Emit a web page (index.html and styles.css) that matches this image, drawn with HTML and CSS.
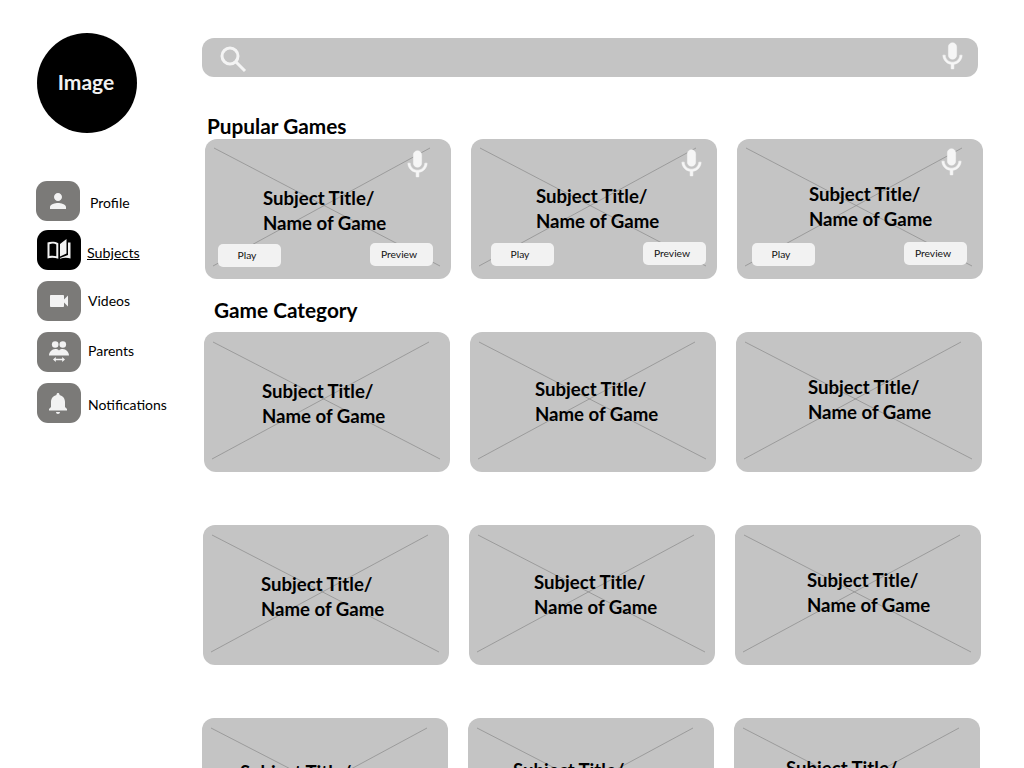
FILE: index.html
```html
<!DOCTYPE html>
<html lang="en">
<head>
<meta charset="utf-8">
<title>Games</title>
<link rel="stylesheet" href="styles.css">
</head>
<body>
<div class="page">
  <aside class="sidebar">
    <div class="avatar">Image</div>
    <nav class="nav">
      <a class="item item-profile"><span class="tile"><svg viewBox="0 0 24 24"><path d="M12 12c2.210 0 4-1.790 4-4s-1.790-4-4-4-4 1.790-4 4 1.790 4 4 4zm0 2c-2.670 0-8 1.340-8 4v2h16v-2c0-2.660-5.330-4-8-4z"/></svg></span><span class="label">Profile</span></a>
      <a class="item item-subjects"><span class="tile tile-active"><svg viewBox="0 0 24 24"><path fill-rule="evenodd" d="M.5 4.500C3.500 3.500 8 3.500 11.300 5.200V20.800C8 19.400 3.500 19.400.5 20.400ZM2.500 6.200V18C5 17.500 7.300 17.600 9.300 18.200V6.400C7.300 5.400 5 5.400 2.500 6.200Z"/><path d="M13 6L19.500 1V15.500L13 18.500ZM21 4.500H23.500V20.400C20 19.400 16.300 19.500 13 20.800V20L21 17Z"/></svg></span><span class="label label-link">Subjects</span></a>
      <a class="item item-videos"><span class="tile"><svg viewBox="0 0 24 24"><path d="M17 10.500V7c0-.55-.45-1-1-1H4c-.55 0-1 .45-1 1v10c0 .55.45 1 1 1h12c.55 0 1-.45 1-1v-3.500l4 4v-11l-4 4z"/></svg></span><span class="label">Videos</span></a>
      <a class="item item-parents"><span class="tile"><svg viewBox="0 0 24 24"><circle cx="8.200" cy="4.500" r="3.300"/><circle cx="15.800" cy="4.500" r="3.300"/><path d="M2 15.500C2 12 5 9 8.200 9c1.600 0 2.900.5 3.800 1.400C12.900 9.500 14.200 9 15.800 9 19 9 22 12 22 15.500Z"/><path d="M6 19.500l2.800-2.500v1.800h6.400V17l2.800 2.500-2.800 2.500v-1.800H8.800V22Z"/></svg></span><span class="label">Parents</span></a>
      <a class="item item-notes"><span class="tile"><svg class="bell" viewBox="0 0 24 24"><path d="M12 23c1.100 0 2-.9 2-2h-4c0 1.100.89 2 2 2zm7-7v-5c0-3.500-2-6.300-5.500-7.100V3.500C13.500 2.670 12.830 2 12 2s-1.500.67-1.500 1.500v.4C7 4.700 5 7.500 5 11v5l-2 2v1.500h18V18l-2-2z"/></svg></span><span class="label">Notifications</span></a>
    </nav>
  </aside>
  <main class="main">
    <div class="search">
      <svg class="search-icon" viewBox="0 0 28 28"><circle cx="11" cy="11" r="8"/><path d="M17 17L26 26"/></svg>
      <svg class="mic-icon" viewBox="0 0 24 24"><path d="M12 14c1.660 0 2.990-1.340 2.990-3L15 5c0-1.660-1.340-3-3-3S9 3.340 9 5v6c0 1.660 1.340 3 3 3zm5.300-3c0 3-2.540 5.100-5.300 5.100S6.700 14 6.700 11H5c0 3.410 2.720 6.230 6 6.720V21h2v-3.280c3.280-.48 6-3.300 6-6.720h-1.700z"/></svg>
    </div>

    <h2 class="heading heading-popular">Pupular Games</h2>
    <section class="row row-1">
      <article class="card col-1">
        <svg class="cross" viewBox="0 0 246 140" preserveAspectRatio="none"><path d="M9 9L235 127M225 9L8 127"/></svg>
        <svg class="card-mic" viewBox="0 0 24 24"><path d="M12 14c1.660 0 2.990-1.340 2.990-3L15 5c0-1.660-1.340-3-3-3S9 3.340 9 5v6c0 1.660 1.340 3 3 3zm5.300-3c0 3-2.540 5.100-5.300 5.100S6.700 14 6.700 11H5c0 3.410 2.720 6.230 6 6.720V21h2v-3.280c3.280-.48 6-3.300 6-6.720h-1.700z"/></svg>
        <p class="title">Subject Title/<br>Name of Game</p>
        <div class="actions"><button class="btn btn-play">Play</button><button class="btn">Preview</button></div>
      </article>
      <article class="card col-2">
        <svg class="cross" viewBox="0 0 246 140" preserveAspectRatio="none"><path d="M9 9L235 127M225 9L8 127"/></svg>
        <svg class="card-mic" viewBox="0 0 24 24"><path d="M12 14c1.660 0 2.990-1.340 2.990-3L15 5c0-1.660-1.340-3-3-3S9 3.340 9 5v6c0 1.660 1.340 3 3 3zm5.300-3c0 3-2.540 5.100-5.300 5.100S6.700 14 6.700 11H5c0 3.410 2.720 6.230 6 6.720V21h2v-3.280c3.280-.48 6-3.300 6-6.720h-1.700z"/></svg>
        <p class="title">Subject Title/<br>Name of Game</p>
        <div class="actions"><button class="btn btn-play">Play</button><button class="btn">Preview</button></div>
      </article>
      <article class="card col-3">
        <svg class="cross" viewBox="0 0 246 140" preserveAspectRatio="none"><path d="M9 9L235 127M225 9L8 127"/></svg>
        <svg class="card-mic" viewBox="0 0 24 24"><path d="M12 14c1.660 0 2.990-1.340 2.990-3L15 5c0-1.660-1.340-3-3-3S9 3.340 9 5v6c0 1.660 1.340 3 3 3zm5.300-3c0 3-2.540 5.100-5.300 5.100S6.700 14 6.700 11H5c0 3.410 2.720 6.230 6 6.720V21h2v-3.280c3.280-.48 6-3.300 6-6.720h-1.700z"/></svg>
        <p class="title">Subject Title/<br>Name of Game</p>
        <div class="actions"><button class="btn btn-play">Play</button><button class="btn">Preview</button></div>
      </article>
    </section>

    <h2 class="heading heading-category">Game Category</h2>
    <section class="row row-2">
      <article class="card col-1"><svg class="cross" viewBox="0 0 246 140" preserveAspectRatio="none"><path d="M9 10L236 127M225 10L8 127"/></svg><p class="title">Subject Title/<br>Name of Game</p></article>
      <article class="card col-2"><svg class="cross" viewBox="0 0 246 140" preserveAspectRatio="none"><path d="M9 10L236 127M225 10L8 127"/></svg><p class="title">Subject Title/<br>Name of Game</p></article>
      <article class="card col-3"><svg class="cross" viewBox="0 0 246 140" preserveAspectRatio="none"><path d="M9 10L236 127M225 10L8 127"/></svg><p class="title">Subject Title/<br>Name of Game</p></article>
    </section>
    <section class="row row-3">
      <article class="card col-1"><svg class="cross" viewBox="0 0 246 140" preserveAspectRatio="none"><path d="M9 10L236 127M225 10L8 127"/></svg><p class="title">Subject Title/<br>Name of Game</p></article>
      <article class="card col-2"><svg class="cross" viewBox="0 0 246 140" preserveAspectRatio="none"><path d="M9 10L236 127M225 10L8 127"/></svg><p class="title">Subject Title/<br>Name of Game</p></article>
      <article class="card col-3"><svg class="cross" viewBox="0 0 246 140" preserveAspectRatio="none"><path d="M9 10L236 127M225 10L8 127"/></svg><p class="title">Subject Title/<br>Name of Game</p></article>
    </section>
    <section class="row row-4">
      <article class="card col-1"><svg class="cross" viewBox="0 0 246 140" preserveAspectRatio="none"><path d="M9 10L236 127M225 10L8 127"/></svg><p class="title">Subject Title/<br>Name of Game</p></article>
      <article class="card col-2"><svg class="cross" viewBox="0 0 246 140" preserveAspectRatio="none"><path d="M9 10L236 127M225 10L8 127"/></svg><p class="title">Subject Title/<br>Name of Game</p></article>
      <article class="card col-3"><svg class="cross" viewBox="0 0 246 140" preserveAspectRatio="none"><path d="M9 10L236 127M225 10L8 127"/></svg><p class="title">Subject Title/<br>Name of Game</p></article>
    </section>
  </main>
</div>
</body>
</html>
```
FILE: styles.css
```css
* { box-sizing: border-box; }
html, body { margin: 0; height: 768px; overflow: hidden; background: #fff; }
body { font-family: "Lato", "Liberation Sans", sans-serif; color: #000; }

.page { display: flex; height: 768px; overflow: hidden; }

/* sidebar */
.sidebar { flex: 0 0 202px; padding: 33px 0 0 36px; }
.avatar {
  width: 100px; height: 100px; margin-left: 1px; padding: 0 2px 3px 0; border-radius: 50%;
  background: #000; color: #f2f2f2;
  display: flex; align-items: center; justify-content: center;
  font-size: 21px; font-weight: 700;
}
.nav { display: flex; flex-direction: column; margin-top: 48px; }
.item { display: flex; align-items: center; color: #000; }
.tile {
  width: 44px; height: 40px; flex: none; border-radius: 11px;
  background: #7b7a78;
  display: flex; align-items: center; justify-content: center;
}
.tile svg { width: 24px; height: 24px; fill: #f2f2f2; }
.tile .bell { margin-left: -2px; }
.tile-active { background: #000; }
.label { font-size: 14px; line-height: 20px; }
.label-link { font-size: 14.300px; text-decoration: underline; }

.item-profile .label { margin: 4px 0 0 10px; }
.item-subjects { margin: 9px 0 0 1px; }
.item-subjects .label { margin: 6px 0 0 6px; }
.item-videos { margin: 11px 0 0 1px; }
.item-videos .label { margin-left: 7px; }
.item-parents { margin: 11px 0 0 1px; }
.item-parents .label { margin: -2px 0 0 7px; }
.item-notes { margin: 11px 0 0 1px; }
.item-notes .label { margin: 4px 0 0 7px; }

/* main */
.main { flex: 1; min-width: 0; padding-top: 38px; }
.search {
  width: 776px; height: 39px; border-radius: 12px; background: #c4c4c4;
  display: flex; align-items: center; justify-content: space-between;
  padding: 0 9px 0 17px;
}
.search-icon { width: 28px; height: 28px; margin-top: 3px; fill: none; stroke: #f4f4f4; stroke-width: 3; }
.mic-icon { width: 33px; height: 33px; margin-top: -3px; fill: #f6f6f6; stroke: #f6f6f6; stroke-width: 0.400; }

.heading { margin: 0; font-size: 20.800px; line-height: 26px; font-weight: 700; }
.heading-popular { margin: 36px 0 0 5px; }
.heading-category { margin: 18px 0 0 12px; }

.row { display: flex; gap: 20px; }
.row-1 { margin: 0 0 0 3px; }
.row-2 { margin: 9px 0 0 2px; }
.row-3 { margin: 53px 0 0 1px; }
.row-4 { margin: 53px 0 0 0; }

.card {
  position: relative; flex: none; width: 246px; height: 140px;
  border-radius: 12px; background: #c4c4c4; overflow: hidden;
}
.cross { position: absolute; inset: 0; width: 100%; height: 100%; }
.cross path { fill: none; stroke: #8a8a8a; stroke-width: 0.700; }
.card-mic { position: absolute; top: 9px; width: 33px; height: 33px; fill: #f6f6f6; stroke: #f6f6f6; stroke-width: 0.400; }
.card.col-1 .card-mic { left: 196px; }
.card.col-2 .card-mic { left: 204px; top: 8px; }
.card.col-3 .card-mic { left: 198px; top: 7px; }

.title {
  position: relative; margin: 0; font-size: 18.600px; line-height: 25px; font-weight: 700;
}
.col-1 .title { padding: 47px 0 0 58px; }
.col-2 .title { padding: 45px 0 0 65px; }
.col-3 .title { padding: 43px 0 0 72px; }
.row-4 .col-1 .title { padding: 42px 0 0 38px; }
.row-4 .col-2 .title { padding: 40px 0 0 45px; }
.row-4 .col-3 .title { padding: 38px 0 0 52px; }

.actions { position: relative; display: flex; align-items: flex-start; gap: 89px; }
.col-1 .actions { margin: 7px 0 0 13px; }
.col-2 .actions { margin: 8px 0 0 20px; }
.col-3 .actions { margin: 10px 0 0 15px; }

.btn {
  width: 63px; height: 23px; padding: 0 5px 0 0; border: 0; border-radius: 5px;
  background: #f2f2f2; color: #111;
  font-family: inherit; font-size: 10.300px; line-height: 23px; text-align: center;
}
.btn-play { margin-top: 1px; }
```
